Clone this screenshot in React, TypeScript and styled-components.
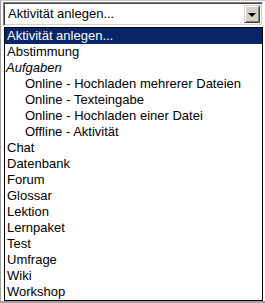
import { createGlobalStyle, styled } from "styled-components";

const GlobalStyle = createGlobalStyle`
    html, body {
        margin: 0;
        padding: 0;
        background: #fff;
    }
    body {
        font-family: "Liberation Sans", Arial, sans-serif;
        font-size: 13px;
        color: #000;
    }
`;

type Item = { label: string; indent?: boolean; group?: boolean; selected?: boolean };

const items: Item[] = [
    { label: "Aktivität anlegen...", selected: true },
    { label: "Abstimmung" },
    { label: "Aufgaben", group: true },
    { label: "Online - Hochladen mehrerer Dateien", indent: true },
    { label: "Online - Texteingabe", indent: true },
    { label: "Online - Hochladen einer Datei", indent: true },
    { label: "Offline - Aktivität", indent: true },
    { label: "Chat" },
    { label: "Datenbank" },
    { label: "Forum" },
    { label: "Glossar" },
    { label: "Lektion" },
    { label: "Lernpaket" },
    { label: "Test" },
    { label: "Umfrage" },
    { label: "Wiki" },
    { label: "Workshop" },
];

export default function App() {
    return (
        <>
            <GlobalStyle />
            <Page>
                <Combo>
                    <ComboText>Aktivität anlegen...</ComboText>
                    <ArrowButton>
                        <Arrow />
                    </ArrowButton>
                </Combo>
                <List>
                    {items.map((item) =>
                        item.group ? (
                            <GroupLabel key={item.label}>{item.label}</GroupLabel>
                        ) : (
                            <Option key={item.label} $selected={item.selected} $indent={item.indent}>
                                {item.label}
                            </Option>
                        )
                    )}
                </List>
            </Page>
        </>
    );
}

const Page = styled.div`
    width: 265px;
    height: 303px;
    box-sizing: border-box;
    padding: 1px 2px 0 2px;
    border-top: 1px solid #c8c8c8;
    border-left: 1px solid #a0a0a0;
    border-bottom: 2px solid #a0a0a0;
    background: #fff;
    display: flex;
    flex-direction: column;
    overflow: hidden;
`;

const Combo = styled.div`
    height: 24px;
    box-sizing: border-box;
    display: flex;
    align-items: center;
    justify-content: space-between;
    border: 1px solid;
    border-color: #808080 #ffffff #ffffff #808080;
    box-shadow: inset 1px 1px 0 #404040, inset -1px -1px 0 #d4d0c8;
    padding: 2px 2px 2px 4px;
    background: #fff;
`;

const ComboText = styled.span`
    line-height: 16px;
`;

const ArrowButton = styled.div`
    width: 16px;
    height: 18px;
    box-sizing: border-box;
    background: #d4d0c8;
    border: 1px solid;
    border-color: #d4d0c8 #404040 #404040 #d4d0c8;
    box-shadow: inset 1px 1px 0 #ffffff, inset -1px -1px 0 #808080;
    display: flex;
    align-items: center;
    justify-content: center;
`;

const Arrow = styled.span`
    width: 0;
    height: 0;
    border-left: 4px solid transparent;
    border-right: 4px solid transparent;
    border-top: 4px solid #000;
    margin-top: 1px;
`;

const List = styled.div`
    margin: 1px 0 0 1px;
    border: 1px solid #000;
    background: #fff;
    display: flex;
    flex-direction: column;
`;

const Option = styled.div<{ $selected?: boolean; $indent?: boolean }>`
    height: 16px;
    line-height: 16px;
    padding-left: ${(p) => (p.$indent ? "20px" : "2px")};
    white-space: nowrap;
    background: ${(p) => (p.$selected ? "#0a246a" : "transparent")};
    color: ${(p) => (p.$selected ? "#fff" : "#000")};
`;

const GroupLabel = styled.div`
    height: 16px;
    line-height: 16px;
    padding-left: 1px;
    font-style: italic;
`;
